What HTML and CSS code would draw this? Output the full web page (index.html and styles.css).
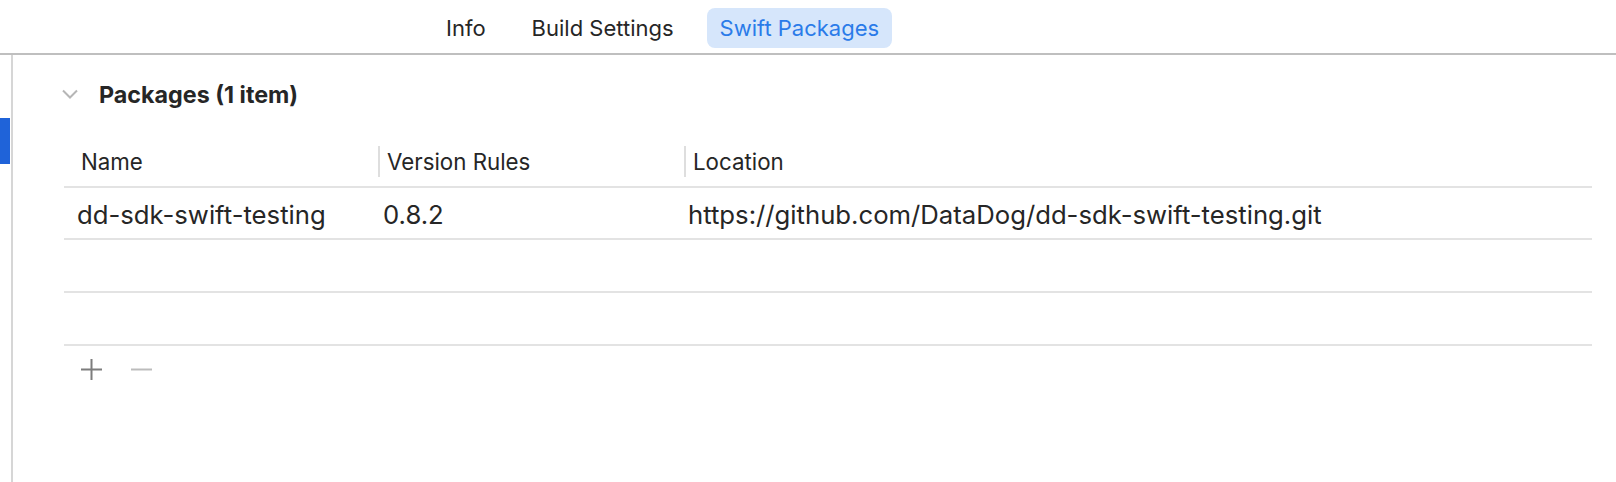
FILE: index.html
```html
<!DOCTYPE html>
<html>
<head>
<meta charset="utf-8">
<link rel="stylesheet" href="styles.css">
</head>
<body>
<div class="toolbar">
  <div class="tab">Info</div>
  <div class="tab">Build Settings</div>
  <div class="tab active">Swift Packages</div>
</div>
<div class="main">
  <div class="edge"><div class="edge-mark"></div></div>
  <div class="content">
    <div class="section-head">
      <svg class="chevron" width="16" height="10" viewBox="0 0 16 10"><polyline points="1,1.5 8,8.5 15,1.5" fill="none" stroke="#b6b6b6" stroke-width="2"/></svg>
      <span class="section-title">Packages (1 item)</span>
    </div>
    <div class="table">
      <div class="row head">
        <div class="cell c1">Name</div>
        <div class="cell c2"><span class="sep"></span><span>Version Rules</span></div>
        <div class="cell c3"><span class="sep"></span><span>Location</span></div>
      </div>
      <div class="row body">
        <div class="cell c1">dd-sdk-swift-testing</div>
        <div class="cell c2">0.8.2</div>
        <div class="cell c3">https://github.com/DataDog/dd-sdk-swift-testing.git</div>
      </div>
      <div class="row body empty"></div>
      <div class="row body empty"></div>
    </div>
    <div class="actions">
      <svg width="21" height="21" viewBox="0 0 21 21"><path d="M10.5 0V21M0 10.5H21" stroke="#7d7d7d" stroke-width="2" fill="none"/></svg>
      <svg width="21" height="21" viewBox="0 0 21 21"><path d="M0 10.5H21" stroke="#bcbcbc" stroke-width="2" fill="none"/></svg>
    </div>
  </div>
</div>
</body>
</html>
```
FILE: styles.css
```css
html, body {
  margin: 0;
  padding: 0;
  background: #ffffff;
}
body {
  font-family: Inter, "Liberation Sans", sans-serif;
  color: #262626;
  width: 1616px;
  height: 482px;
  overflow: hidden;
}
.toolbar {
  height: 55px;
  border-bottom: 2px solid #bfbfbf;
  display: flex;
  align-items: center;
  gap: 16px;
  padding-left: 431px;
  box-sizing: border-box;
}
.tab {
  height: 40px;
  line-height: 40px;
  padding: 0 15px;
  font-size: 22px;
  border-radius: 8px;
  color: #262626;
  margin-top: 2px;
}
.tab.active {
  background: #d6e6fb;
  color: #2a7be9;
  padding: 0 13px;
  margin-left: 2px;
}
.main {
  display: flex;
  height: 427px;
}
.edge {
  width: 11px;
  border-right: 2px solid #d6d6d6;
  flex: none;
}
.edge-mark {
  margin-top: 63px;
  width: 10px;
  height: 46px;
  background: #1f63d9;
}
.content {
  flex: 1;
  padding: 25px 24px 0 49px;
}
.section-head {
  display: flex;
  align-items: center;
  height: 28px;
}
.chevron {
  margin-right: 21px;
}
.section-title {
  font-weight: 700;
  font-size: 23.3px;
}
.table {
  margin-left: 2px;
  margin-top: 28px;
}
.row {
  display: grid;
  grid-template-columns: 314px 306px 1fr;
  height: 50px;
  border-bottom: 2px solid #e3e3e3;
  align-items: center;
}
.row.head {
  font-size: 22.3px;
}
.row.body {
  font-size: 25.7px;
  padding-top: 2px;
  height: 48px;
}
.row.body.empty {
  height: 49px;
}
.cell {
  display: flex;
  align-items: center;
  white-space: nowrap;
}
.head .c1 { padding-left: 17px; }
.head .c2, .head .c3 { padding-left: 0; }
.sep {
  width: 2px;
  height: 31px;
  background: #dedede;
  margin-right: 7px;
  flex: none;
}
.body .c1 { padding-left: 13px; }
.body .c2 { padding-left: 5px; }
.body .c3 { padding-left: 4px; }
.actions {
  display: flex;
  gap: 29px;
  padding: 13px 0 0 19px;
}
```
